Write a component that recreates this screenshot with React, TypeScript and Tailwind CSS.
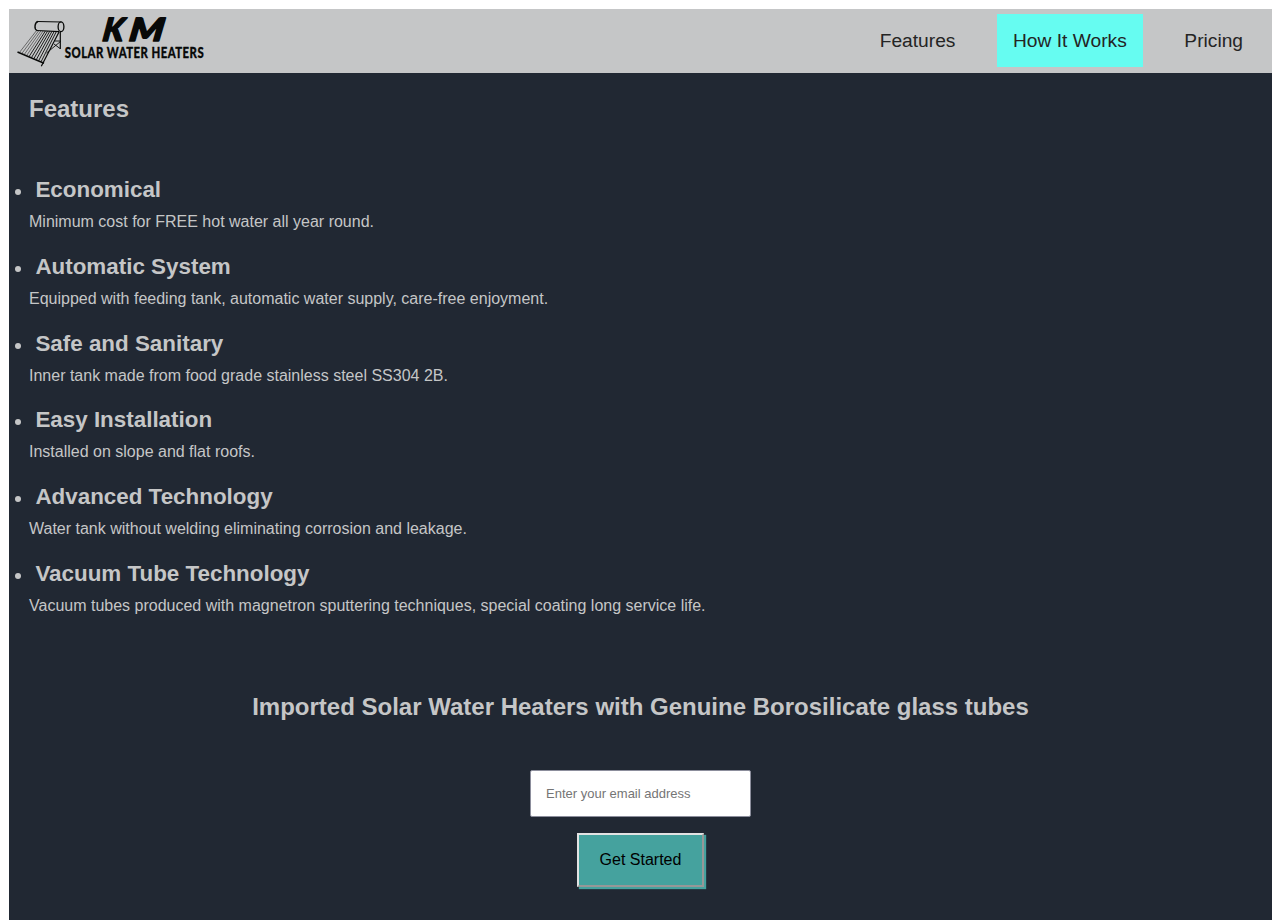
const features = [
  { title: "Economical", text: "Minimum cost for FREE hot water all year round." },
  { title: "Automatic System", text: "Equipped with feeding tank, automatic water supply, care-free enjoyment." },
  { title: "Safe and Sanitary", text: "Inner tank made from food grade stainless steel SS304 2B." },
  { title: "Easy Installation", text: "Installed on slope and flat roofs." },
  { title: "Advanced Technology", text: "Water tank without welding eliminating corrosion and leakage." },
  { title: "Vacuum Tube Technology", text: "Vacuum tubes produced with magnetron sputtering techniques, special coating long service life." },
];

const tubes = Array.from({ length: 10 }, (_, i) => i);

function Logo() {
  return (
    <svg width="200" height="64" viewBox="9 9 200 64" fill="none" stroke="#080908" role="img" aria-label="KM Solar Water Heaters">
      {tubes.map((i) => (
        <path
          key={i}
          d={`M${36.5 + i * 2.2} ${30.6 + i * 0.12}L${19.5 + i * 2.4} ${52.4 + i * 1.03}`}
          strokeWidth={i < 4 ? 0.5 : 0.9}
        />
      ))}
      <path d="M37.5 21.5L61.5 22M36.8 30.5L59 31.6" strokeWidth="1.2" />
      <path d="M38 21.5C34.4 22.4 34 29.4 37 30.5" strokeWidth="1.4" />
      <ellipse cx="61" cy="26.8" rx="2.9" ry="4.9" strokeWidth="1.3" />
      <path d="M17.5 52L44 63.3" strokeWidth="1.5" />
      <path d="M59 32L41.3 66.2M60.3 32V49" strokeWidth="1.2" />
      <path d="M60.5 41.5L46.5 53M55 41H60.5M54 44L60 48.5" strokeWidth="0.9" />
      <g fill="#080908" stroke="#080908" strokeLinejoin="round" fontFamily="Lato, sans-serif">
        <g fontWeight="900" fontStyle="italic" fontSize="32" strokeWidth="1.5">
          <text transform="translate(101.8 41) skewX(-8) scale(1 1)">K</text>
          <text transform="translate(128.2 41) skewX(-8) scale(1.22 1)">M</text>
        </g>
        <text x="64.8" y="57.6" fontWeight="900" fontSize="14.6" letterSpacing="0.6" textLength="139.3" lengthAdjust="spacingAndGlyphs" strokeWidth="0.3">SOLAR WATER HEATERS</text>
      </g>
    </svg>
  );
}

export default function App() {
  return (
    <div className="h-[920px] overflow-hidden bg-white pt-[9px] pl-[9px] font-['Liberation_Sans',Arial,sans-serif] text-[#c5c6c7]">
      <div className="flex h-full flex-col bg-[#212833]">
        <header className="flex h-16 shrink-0 items-start justify-between bg-[#c5c6c7]">
          <Logo />
          <nav className="flex gap-[25.6px] pt-[5px] pr-[13px] text-[19.2px] leading-[53px] text-[#242424]">
            <a className="px-4">Features</a>
            <a className="bg-[#66fcf1] px-4">How It Works</a>
            <a className="px-4">Pricing</a>
          </nav>
        </header>
        <main className="pt-[22px]">
          <h2 className="pl-5 text-2xl leading-7 font-bold">Features</h2>
          <ul className="pt-[53px]">
            {features.map((f) => (
              <li key={f.title} className="h-[76.8px]">
                <div className="flex h-[27px] items-center pl-[6px]">
                  <span className="mt-[5px] mr-[14.4px] size-[6px] rounded-full bg-[#c5c6c7]" />
                  <h3 className="text-[22.4px] leading-[27px] font-bold">{f.title}</h3>
                </div>
                <p className="pt-[10px] pl-5 text-base leading-[18px]">{f.text}</p>
              </li>
            ))}
          </ul>
          <section className="flex flex-col items-center pt-14">
            <h2 className="text-2xl leading-7 font-bold">Imported Solar Water Heaters with Genuine Borosilicate glass tubes</h2>
            <input
              type="email"
              placeholder="Enter your email address"
              className="mt-[49px] h-[47px] w-[221px] rounded-[2px] border border-[#8c8e9c] bg-white px-[15px] text-[13px] text-black placeholder:text-[#757575]"
            />
            <button className="mt-4 h-[54px] w-[127px] border-2 border-t-[#e3e3e3] border-r-[#979797] border-b-[#979797] border-l-[#e3e3e3] bg-[#45a29e] text-base text-black shadow-[2px_2px_1px_#45a29e]">
              Get Started
            </button>
          </section>
        </main>
      </div>
    </div>
  );
}
